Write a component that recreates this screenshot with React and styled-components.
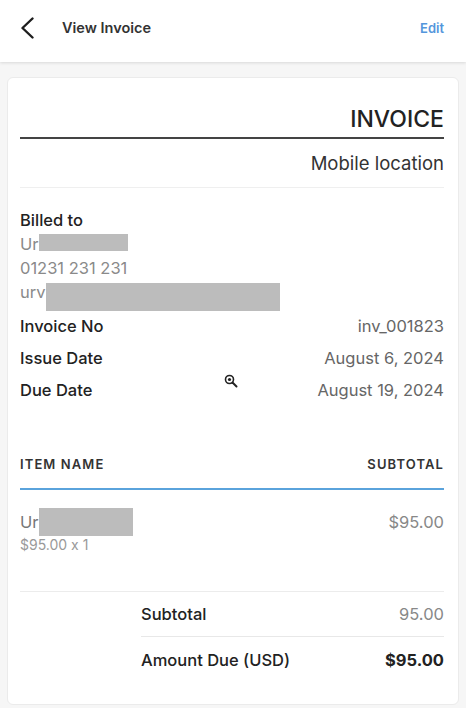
import React from "react";
import styled, { createGlobalStyle } from "styled-components";

const Global = createGlobalStyle`
  html, body { margin: 0; padding: 0; background: #f6f6f6; }
  body {
    font-family: Inter, "Noto Sans", "Liberation Sans", sans-serif;
    font-feature-settings: "calt" 0;
    color: #222;
    -webkit-font-smoothing: antialiased;
  }
  * { box-sizing: border-box; }
`;

const Page = styled.div`
  width: 466px;
  height: 708px;
  overflow: hidden;
  background: #f6f6f6;
`;

const Header = styled.header`
  height: 62px;
  background: #fff;
  display: flex;
  align-items: flex-start;
  padding: 17px 22px 0 20px;
  box-shadow: 0 1px 3px rgba(0,0,0,0.12);
  position: relative;
  z-index: 1;
`;

const BackButton = styled.button`
  border: 0;
  background: none;
  padding: 0;
  width: 16px;
  height: 22px;
  display: flex;
  align-items: center;
  cursor: pointer;
`;

const Title = styled.h1`
  margin: 0 0 0 26px;
  font-size: 14.5px;
  line-height: 22px;
  font-weight: 600;
  color: #333;
  flex: 1;
`;

const EditLink = styled.span`
  font-size: 13px;
  line-height: 22px;
  font-weight: 600;
  color: #5496dc;
`;

const Main = styled.main`
  padding: 15px 7px 0;
`;

const Card = styled.section`
  position: relative;
  background: #fff;
  border: 1px solid #ebebeb;
  border-radius: 6px;
  padding: 26px 14px 21px 12px;
`;

const DocTitle = styled.h2`
  margin: 0;
  font-size: 23px;
  line-height: 30px;
  font-weight: 500;
  text-align: right;
  color: #222;
  padding-bottom: 3px;
  border-bottom: 2px solid #444;
`;

const Location = styled.div`
  font-size: 18.5px;
  line-height: 24px;
  text-align: right;
  color: #333;
  padding: 12px 0 12px;
  border-bottom: 1px solid #efefef;
`;

const Billed = styled.div`
  padding-top: 20px;
  display: flex;
  flex-direction: column;
`;

const Label = styled.div`
  font-size: 16.5px;
  line-height: 24px;
  height: 24px;
  font-weight: 500;
  color: #222;
`;

const Muted = styled.div`
  font-size: 16.5px;
  line-height: 24px;
  height: 24px;
  color: #8a8a8a;
  white-space: nowrap;
`;

/* privacy blur block laid over the text line; zero-height margin box so it never moves the line */
const Redact = styled.span`
  display: inline-block;
  background: #bcbcbc;
  width: ${(p) => p.$w}px;
  height: ${(p) => p.$h}px;
  margin: ${(p) => -p.$h / 2}px 0;
  vertical-align: ${(p) => p.$c}px;
`;

const Meta = styled.div`
  margin-top: 6px;
`;

const MetaRow = styled.div`
  height: 32px;
  display: flex;
  align-items: center;
  justify-content: space-between;
  font-size: 16.5px;
`;

const MetaKey = styled.span`
  font-weight: 500;
  color: #222;
`;

const MetaVal = styled.span`
  color: #666;
`;

const TableHead = styled.div`
  margin-top: 50px;
  display: flex;
  justify-content: space-between;
  font-size: 13px;
  line-height: 16px;
  font-weight: 600;
  letter-spacing: 1.1px;
  color: #333;
  padding-bottom: 16px;
  border-bottom: 2px solid #5aa3dc;
`;

const ItemRow = styled.div`
  display: flex;
  justify-content: space-between;
  padding: 21px 0 34px;
  border-bottom: 1px solid #ececec;
`;

const ItemInfo = styled.div`
  display: flex;
  flex-direction: column;
`;

const ItemName = styled.div`
  font-size: 16.5px;
  line-height: 22px;
  height: 22px;
  color: #777;
  white-space: nowrap;
`;

const ItemQty = styled.div`
  font-size: 14px;
  line-height: 24px;
  height: 24px;
  color: #999;
`;

const ItemPrice = styled.div`
  font-size: 16.5px;
  line-height: 22px;
  color: #888;
`;

const Totals = styled.div`
  margin-left: 121px;
`;

const TotalRow = styled.div`
  height: ${(p) => (p.$first ? 45 : 46)}px;
  display: flex;
  align-items: center;
  justify-content: space-between;
  font-size: 16.5px;
  border-bottom: ${(p) => (p.$first ? "1px solid #e8e8e8" : "0")};
`;

const TotalKey = styled.span`
  font-weight: 500;
  color: #222;
`;

const TotalVal = styled.span`
  color: ${(p) => (p.$strong ? "#222" : "#888")};
  font-weight: ${(p) => (p.$strong ? 700 : 400)};
`;

const Cursor = styled.svg`
  position: absolute;
  left: 216px;
  top: 296px;
`;

export default function App() {
  return (
    <Page>
      <Global />
      <Header>
        <BackButton aria-label="Back">
          <svg width="14" height="22" viewBox="0 0 14 22">
            <path d="M12.5 1.5 L2.5 11 L12.5 20.5" fill="none" stroke="#1e1e1e" strokeWidth="2.4" strokeLinecap="round" strokeLinejoin="round" />
          </svg>
        </BackButton>
        <Title>View Invoice</Title>
        <EditLink>Edit</EditLink>
      </Header>
      <Main>
        <Card>
          <DocTitle>INVOICE</DocTitle>
          <Location>Mobile location</Location>
          <Billed>
            <Label>Billed to</Label>
            <Muted>
              Ur<Redact $w={89} $h={17} $c={8} />
            </Muted>
            <Muted>01231 231 231</Muted>
            <Muted>
              urv<Redact $w={234} $h={28} $c={1} />
            </Muted>
          </Billed>
          <Meta>
            <MetaRow>
              <MetaKey>Invoice No</MetaKey>
              <MetaVal>inv_001823</MetaVal>
            </MetaRow>
            <MetaRow>
              <MetaKey>Issue Date</MetaKey>
              <MetaVal>August 6, 2024</MetaVal>
            </MetaRow>
            <MetaRow>
              <MetaKey>Due Date</MetaKey>
              <MetaVal>August 19, 2024</MetaVal>
            </MetaRow>
          </Meta>
          <TableHead>
            <span>ITEM NAME</span>
            <span>SUBTOTAL</span>
          </TableHead>
          <ItemRow>
            <ItemInfo>
              <ItemName>
                Ur<Redact $w={94} $h={28} $c={6} />
              </ItemName>
              <ItemQty>$95.00 x 1</ItemQty>
            </ItemInfo>
            <ItemPrice>$95.00</ItemPrice>
          </ItemRow>
          <Totals>
            <TotalRow $first>
              <TotalKey>Subtotal</TotalKey>
              <TotalVal>95.00</TotalVal>
            </TotalRow>
            <TotalRow>
              <TotalKey>Amount Due (USD)</TotalKey>
              <TotalVal $strong>$95.00</TotalVal>
            </TotalRow>
          </Totals>
          <Cursor width="14" height="14" viewBox="0 0 14 14">
            <circle cx="5.5" cy="5.5" r="4" fill="#fff" stroke="#222" strokeWidth="1.6" />
            <circle cx="5.5" cy="5.5" r="1.6" fill="#222" />
            <path d="M8.5 8.5 L12.5 12.5" stroke="#222" strokeWidth="2" strokeLinecap="round" />
          </Cursor>
        </Card>
      </Main>
    </Page>
  );
}
